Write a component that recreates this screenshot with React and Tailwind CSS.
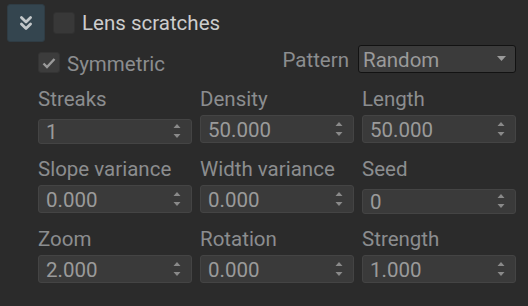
import { ChevronsDown } from "lucide-react";

const fields = [
  { label: "Streaks", value: "1", int: true },
  { label: "Density", value: "50.000" },
  { label: "Length", value: "50.000" },
  { label: "Slope variance", value: "0.000" },
  { label: "Width variance", value: "0.000" },
  { label: "Seed", value: "0", int: true },
  { label: "Zoom", value: "2.000" },
  { label: "Rotation", value: "0.000" },
  { label: "Strength", value: "1.000" },
];

function Spinner() {
  return (
    <svg width="8" height="18" viewBox="0 0 8 18" className="shrink-0">
      <path d="M4 2 L7.5 6 L0.5 6 Z" fill="#8a8a8a" />
      <path d="M0.5 12 L7.5 12 L4 16 Z" fill="#8a8a8a" />
    </svg>
  );
}

function Field({ label, value, int }) {
  return (
    <div className="h-[54px] flex flex-col">
      <div className="h-[20px] leading-[20px] text-[20.5px] text-[#8b8d8f] whitespace-nowrap">
        {label}
      </div>
      <div
        className={
          int
            ? "mt-[10px] h-[29px] flex items-center justify-between pl-[7px] pr-[10px] bg-[#3a3a3a] border border-[#444444] rounded-[3px]"
            : "mt-[6px] h-[29px] flex items-center justify-between pl-[7px] pr-[10px] bg-[#3a3a3a] border border-[#444444] rounded-[3px]"
        }
      >
        <span className="pt-[2px] text-[20.5px] leading-none text-[#9a9a9a]">{value}</span>
        <Spinner />
      </div>
    </div>
  );
}

export default function App() {
  return (
    <div
      className="w-[528px] h-[306px] bg-[#2b2b2b] overflow-hidden"
      style={{ fontFamily: "Roboto, 'Liberation Sans', sans-serif" }}
    >
      {/* Header */}
      <div className="flex items-center pl-[7px] pt-[4px]">
        <div className="w-[38px] h-[38px] rounded-[3px] bg-[#34454f] border border-[#2f3c44] flex items-center justify-center">
          <ChevronsDown size={22} strokeWidth={3} className="text-[#c4c8ca]" />
        </div>
        <div className="ml-[8px] w-[22px] h-[22px] rounded-[3px] bg-[#383838] border border-[#313131]" />
        <span className="ml-[7px] text-[20.5px] text-[#cdcdcd]">Lens scratches</span>
      </div>

      {/* Symmetric / Pattern */}
      <div className="mt-[3px] ml-[38px] mr-[12px] h-[28px] flex items-end justify-between">
        <div className="flex items-end">
          <div className="w-[22px] h-[21px] rounded-[3px] bg-[#3c3c3c] border border-[#343434] flex items-center justify-center">
            <svg width="14" height="12" viewBox="0 0 14 12">
              <path d="M1.5 6.5 L5 10 L12.5 2" stroke="#9a9a9a" strokeWidth="2.4" fill="none" />
            </svg>
          </div>
          <span className="ml-[7px] leading-[17px] text-[20.5px] text-[#8b8d8f]">Symmetric</span>
        </div>
        <div className="flex items-center">
          <span className="mr-[9px] pt-[3px] text-[20.5px] leading-none text-[#8b8d8f]">Pattern</span>
          <div className="w-[158px] h-[28px] rounded-[3px] bg-[#3b3b3b] border border-[#121212] flex items-center justify-between pl-[4px] pr-[9px]">
            <span className="pt-[3px] text-[20.5px] leading-none text-[#9a9a9a]">Random</span>
            <svg width="9" height="6" viewBox="0 0 9 6">
              <path d="M0 0 L9 0 L4.5 5 Z" fill="#9a9a9a" />
            </svg>
          </div>
        </div>
      </div>

      {/* Fields */}
      <div className="mt-[16px] ml-[38px] mr-[12px] grid grid-cols-3 gap-x-[8px] gap-y-[16px]">
        {fields.map((f) => (
          <Field key={f.label} {...f} />
        ))}
      </div>
    </div>
  );
}
